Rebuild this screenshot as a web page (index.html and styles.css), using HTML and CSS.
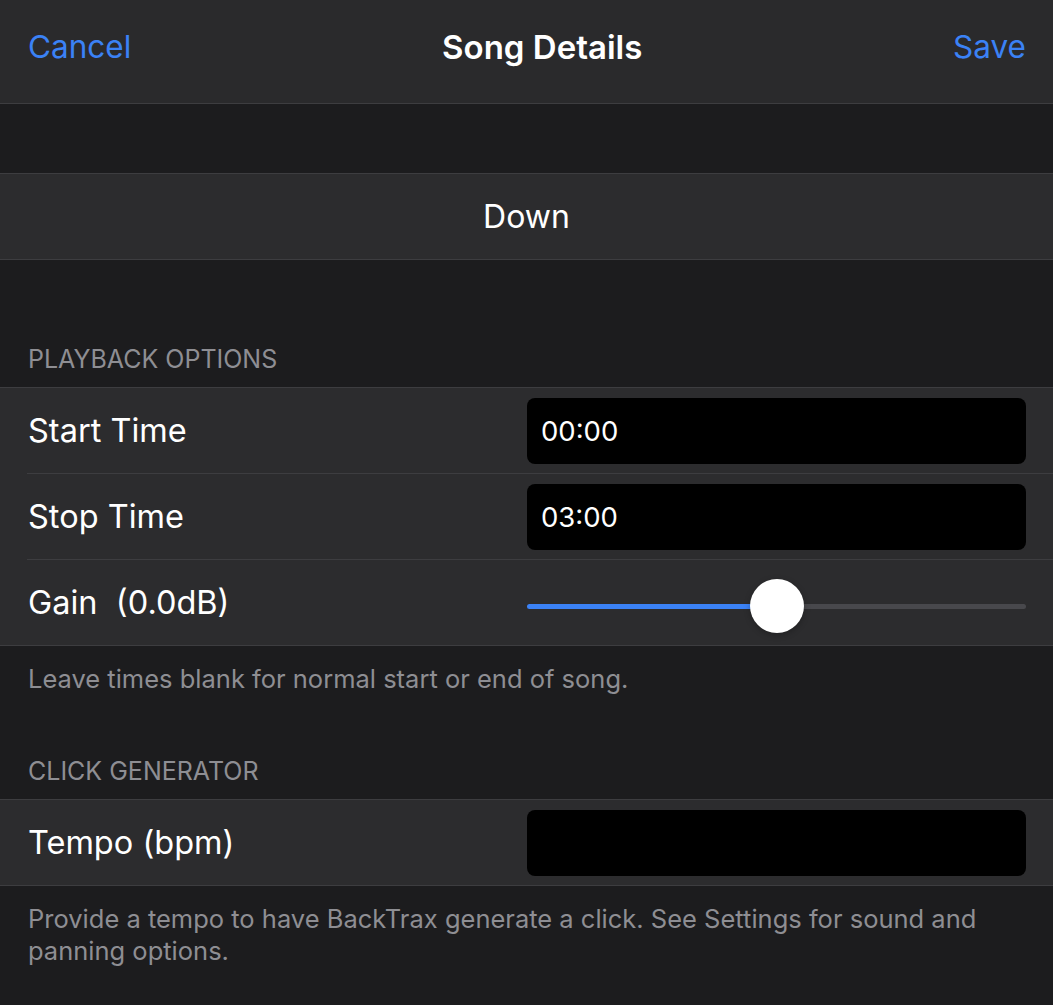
FILE: index.html
```html
<!DOCTYPE html>
<html lang="en">
<head>
  <meta charset="UTF-8">
  <meta name="viewport" content="width=device-width, initial-scale=1.0">
  <title>Song Details</title>
  <link rel="stylesheet" href="styles.css">
</head>
<body>
  <header class="navbar">
    <button class="nav-btn">Cancel</button>
    <h1 class="nav-title">Song Details</h1>
    <button class="nav-btn">Save</button>
  </header>

  <main class="form">
    <div class="top-gap"></div>

    <section class="group">
      <div class="cell">
        <div class="cell-body cell-center">Down</div>
      </div>
    </section>

    <h2 class="section-header first">Playback Options</h2>
    <section class="group">
      <div class="cell">
        <div class="cell-body">
          <span class="label">Start Time</span>
          <div class="field">00:00</div>
        </div>
      </div>
      <div class="cell">
        <div class="cell-body">
          <span class="label">Stop Time</span>
          <div class="field">03:00</div>
        </div>
      </div>
      <div class="cell">
        <div class="cell-body">
          <span class="label">Gain&nbsp; (0.0dB)</span>
          <div class="slider">
            <div class="track-fill" style="width: 50%"></div>
            <div class="thumb"></div>
            <div class="track-rest"></div>
          </div>
        </div>
      </div>
    </section>
    <p class="section-footer">Leave times blank for normal start or end of song.</p>

    <h2 class="section-header">Click Generator</h2>
    <section class="group">
      <div class="cell">
        <div class="cell-body">
          <span class="label">Tempo (bpm)</span>
          <div class="field"></div>
        </div>
      </div>
    </section>
    <p class="section-footer">Provide a tempo to have BackTrax generate a click. See Settings for sound and panning options.</p>
  </main>
</body>
</html>
```

FILE: styles.css
```css
body {
  margin: 0;
  background-color: #1c1c1e;
  color: #ffffff;
  font-family: 'Inter', 'Helvetica Neue', sans-serif;
}
.navbar {
  display: flex;
  justify-content: space-between;
  align-items: center;
  height: 104px;
  padding: 0 27px 10px 28px;
  box-sizing: border-box;
  background: #2a2a2c;
  border-bottom: 1px solid #3d3d40;
}
.nav-btn {
  background: none;
  border: none;
  padding: 0;
  font-family: inherit;
  font-size: 31.5px;
  color: #3b82f6;
  cursor: pointer;
}
.nav-title {
  margin: 0;
  font-size: 33px;
  font-weight: 600;
}
.top-gap {
  height: 69px;
}
.group {
  background: #2c2c2e;
  border-top: 1px solid #3d3d40;
  border-bottom: 1px solid #3d3d40;
}
.cell {
  padding-left: 27px;
}
.cell-body {
  display: flex;
  align-items: center;
  justify-content: space-between;
  height: 85px;
  padding-right: 27px;
  border-bottom: 1px solid #3d3d40;
}
.cell:last-child .cell-body {
  border-bottom: none;
}
.cell-center {
  justify-content: center;
  font-size: 32px;
}
.label {
  margin-left: 1px;
  font-size: 32.5px;
}
.field {
  width: 499px;
  height: 66px;
  box-sizing: border-box;
  padding: 0 14px;
  display: flex;
  align-items: center;
  background: #000000;
  border-radius: 8px;
  font-size: 27.5px;
}
.slider {
  width: 499px;
  margin-top: 7px;
  display: flex;
  align-items: center;
}
.track-fill {
  height: 5px;
  margin-right: -27px;
  border-radius: 3px 0 0 3px;
  background: #3b82f6;
}
.thumb {
  flex: none;
  width: 54px;
  height: 54px;
  border-radius: 50%;
  background: #ffffff;
  box-shadow: 0 2px 6px rgba(0, 0, 0, 0.25);
  position: relative;
  z-index: 1;
}
.track-rest {
  flex: 1;
  height: 5px;
  margin-left: -27px;
  border-radius: 0 3px 3px 0;
  background: #48484c;
}
.section-header {
  margin: 0;
  padding: 0 28px 14px;
  font-size: 25px;
  font-weight: 400;
  line-height: 28px;
  text-transform: uppercase;
  color: #8e8e93;
}
.section-header.first {
  padding-top: 85px;
}
.section-footer {
  margin: 0 0 62px;
  padding: 17px 28px 0;
  font-size: 25.5px;
  line-height: 32px;
  color: #8e8e93;
}
```
